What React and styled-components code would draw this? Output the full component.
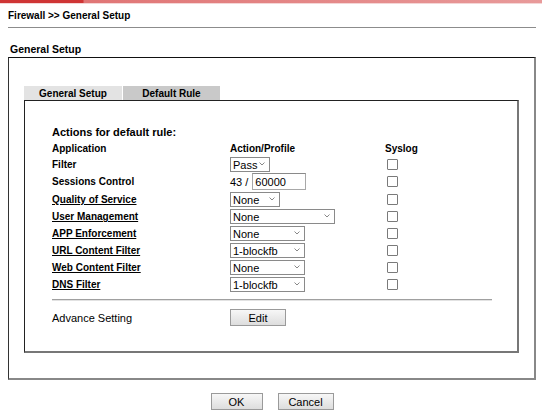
import React from 'react'
import styled, { createGlobalStyle } from 'styled-components'

const GlobalStyle = createGlobalStyle`
  body {
    margin: 0;
    background: #fff;
    font-family: "Liberation Sans", Arial, sans-serif;
    color: #000;
  }
`

const Page = styled.div`
  width: 542px;
  height: 413px;
  overflow: hidden;
`

const TopBar = styled.div`
  height: 3px;
  background: linear-gradient(to right, #cf3434 0, #cf3434 83px, #e07575 84px, #e89a9a 100%);
  border-bottom: 1px solid #f4d6d6;
`

const Title = styled.div`
  margin: 0 6px 0 8px;
  height: 23px;
  display: flex;
  align-items: center;
  font-size: 10px;
  font-weight: bold;
  border-bottom: 1px solid #8c8c8c;
`

const Heading = styled.div`
  height: 29px;
  padding: 0 0 2px 10px;
  box-sizing: border-box;
  display: flex;
  align-items: flex-end;
  font-size: 10.5px;
  font-weight: bold;
`

const Outer = styled.div`
  margin-left: 8px;
  width: 528px;
  box-sizing: border-box;
  border-top: 1px solid #111;
  border-left: 1px solid #333;
  border-right: 2px solid #888;
  border-bottom: 2px solid #888;
  padding: 28px 15px 25px 15px;
`

const Tabs = styled.div`
  display: flex;
  gap: 1px;
`

const Tab = styled.div`
  width: ${p => p.$w}px;
  height: 14px;
  display: flex;
  align-items: center;
  justify-content: center;
  font-size: 10px;
  font-weight: bold;
  background: ${p => (p.$active ? '#c9c9c9' : '#e3e3e3')};
`

const Panel = styled.div`
  border-top: 1px solid #222;
  border-left: 1px solid #222;
  border-right: 2px solid #777;
  border-bottom: 2px solid #777;
  padding: 22px 25px 25px 27px;
`

const Grid = styled.div`
  display: grid;
  grid-template-columns: 178px 155px 107px;
  width: 440px;
`

const Cell = styled.div`
  height: ${p => p.$h || 17}px;
  display: flex;
  align-items: center;
  font-size: ${p => (p.$big ? 11 : 10)}px;
  font-weight: bold;
  white-space: nowrap;
`

const Wide = styled(Cell)`
  grid-column: 1 / -1;
`

const Link = styled.a`
  color: #000;
  text-decoration: underline;
  cursor: pointer;
`

const SelectWrap = styled.div`
  position: relative;
  width: ${p => p.$w}px;
  height: 15px;
`

const NativeSelect = styled.select`
  appearance: none;
  width: 100%;
  height: 100%;
  box-sizing: border-box;
  border: 1px solid #8a8a8a;
  border-radius: 0;
  background: #fff;
  padding: 0 0 0 2px;
  font-family: "Liberation Sans", Arial, sans-serif;
  font-size: 11px;
  color: #000;
  outline: none;
`

const Chevron = styled.svg`
  position: absolute;
  right: 5px;
  top: 5px;
  pointer-events: none;
`

const Sessions = styled.div`
  display: flex;
  align-items: center;
  gap: 4px;
  font-size: 11px;
  font-weight: normal;
`

const TextInput = styled.input`
  width: 54px;
  height: 17px;
  box-sizing: border-box;
  border: 1px solid #a8a8a8;
  border-top-color: #8a8a8a;
  padding: 0 2px;
  font-family: "Liberation Sans", Arial, sans-serif;
  font-size: 11px;
  color: #000;
  outline: none;
`

const Check = styled.span`
  display: inline-block;
  width: 9px;
  height: 9px;
  margin-left: 2px;
  border: 1px solid #7a7a7a;
  border-radius: 1px;
  background: #fff;
`

const Divider = styled.div`
  width: 440px;
  margin-top: 6px;
  border-top: 1px solid #a0a0a0;
  border-bottom: 1px solid #e2e2e2;
`

const AdvanceRow = styled.div`
  display: grid;
  grid-template-columns: 178px 1fr;
  align-items: center;
  margin-top: 8px;
  font-size: 11px;
`

const Button = styled.button`
  width: ${p => p.$w}px;
  height: 17px;
  box-sizing: border-box;
  border: 1px solid #9a9a9a;
  border-radius: 0;
  background: linear-gradient(#f7f7f7, #dddddd);
  font-family: "Liberation Sans", Arial, sans-serif;
  font-size: 11px;
  color: #000;
  padding: 0;
  cursor: pointer;
`

const Footer = styled.div`
  display: flex;
  justify-content: center;
  gap: 15px;
  margin-top: 13px;
  padding-left: 2px;
`

function Select({ w, value }) {
  return (
    <SelectWrap $w={w}>
      <NativeSelect defaultValue={value}>
        <option>{value}</option>
      </NativeSelect>
      <Chevron width="6" height="4" viewBox="0 0 6 4">
        <path d="M0.5 0.5 L3 3 L5.5 0.5" fill="none" stroke="#888" strokeWidth="1" />
      </Chevron>
    </SelectWrap>
  )
}

const rows = [
  { label: 'Quality of Service', value: 'None', w: 50 },
  { label: 'User Management', value: 'None', w: 105 },
  { label: 'APP Enforcement', value: 'None', w: 75 },
  { label: 'URL Content Filter', value: '1-blockfb', w: 75 },
  { label: 'Web Content Filter', value: 'None', w: 75 },
  { label: 'DNS Filter', value: '1-blockfb', w: 75 },
]

export default function App() {
  return (
    <Page>
      <GlobalStyle />
      <TopBar />
      <Title>Firewall &gt;&gt; General Setup</Title>
      <Heading>General Setup</Heading>
      <Outer>
        <Tabs>
          <Tab $w={98}>General Setup</Tab>
          <Tab $w={97} $active>Default Rule</Tab>
        </Tabs>
        <Panel>
          <Grid>
            <Wide $big>Actions for default rule:</Wide>
            <Cell>Application</Cell>
            <Cell>Action/Profile</Cell>
            <Cell>Syslog</Cell>

            <Cell $h={15}>Filter</Cell>
            <Cell $h={15}><Select w={40} value="Pass" /></Cell>
            <Cell $h={15}><Check /></Cell>

            <Cell $h={19}>Sessions Control</Cell>
            <Cell $h={19}>
              <Sessions>
                <span>43 /</span>
                <TextInput defaultValue="60000" />
              </Sessions>
            </Cell>
            <Cell $h={19}><Check /></Cell>

            {rows.map(r => (
              <React.Fragment key={r.label}>
                <Cell><Link>{r.label}</Link></Cell>
                <Cell><Select w={r.w} value={r.value} /></Cell>
                <Cell><Check /></Cell>
              </React.Fragment>
            ))}
          </Grid>
          <Divider />
          <AdvanceRow>
            <span>Advance Setting</span>
            <span><Button $w={56}>Edit</Button></span>
          </AdvanceRow>
        </Panel>
      </Outer>
      <Footer>
        <Button $w={52}>OK</Button>
        <Button $w={56}>Cancel</Button>
      </Footer>
    </Page>
  )
}
